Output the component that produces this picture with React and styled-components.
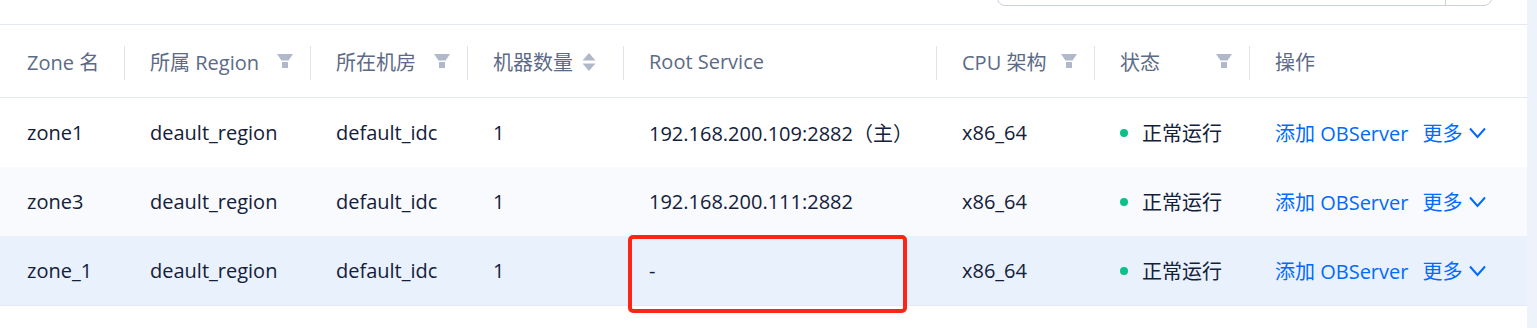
import React from 'react';
import styled, { createGlobalStyle } from 'styled-components';

const GlobalStyle = createGlobalStyle`
    html, body {
        margin:0;
        padding:0;
        background:#eef2fa;
    }
    body{
        font-family:"Open Sans", "Noto Sans CJK SC", sans-serif;
        font-size:20px;
        color:#132039;
    }
`;

const COLUMNS = '125px 186px 157px 156px 313px 158px 155px 1fr';

const Page = styled.div`
    width:1537px;
    height:328px;
    display:flex;
    overflow:hidden;
`;

const Panel = styled.section`
    position:relative;
    width:1527px;
    background:#FFF;
`;

const Toolbar = styled.div`
    height:24px;
    display:flex;
    justify-content:flex-end;
    align-items:flex-start;
    padding-right:35px;
    overflow:hidden;
    border-bottom:1px solid #e3e8f4;
`;

const SearchBox = styled.div`
    margin-top:-34px;
    width:495px;
    height:40px;
    box-sizing:border-box;
    border:1px solid #c9d0de;
    border-radius:8px;
    display:flex;
    justify-content:flex-end;
`;

const SearchButton = styled.div`
    width:45px;
    border-left:1px solid #c9d0de;
`;

const Row = styled.div`
    display:grid;
    grid-template-columns:${COLUMNS};
    height:${p => p.$head ? '72px' : '69px'};
    background:${p => p.$bg || '#FFF'};
    border-bottom:${p => p.$border ? '1px solid #e3e8f4' : 'none'};
`;

const HeadCell = styled.div`
    position:relative;
    display:flex;
    align-items:center;
    padding:1px 18px 0 ${p => p.$first ? '27px' : '25px'};
    color:#5c6a86;
    white-space:nowrap;
    &::after{
        content:'';
        display:${p => p.$last ? 'none' : 'block'};
        position:absolute;
        right:0;
        top:21px;
        width:1px;
        height:34px;
        background:#dfe3ec;
    }
`;

const Cell = styled.div`
    display:flex;
    align-items:center;
    padding-left:${p => p.$first ? '27px' : '25px'};
    white-space:nowrap;
`;

const FilterIcon = styled.svg`
    margin-left:auto;
    width:16px;
    height:15px;
    fill:#b1b8c9;
`;

const SortIcon = styled.svg`
    margin-left:9px;
    width:14px;
    height:18px;
    fill:#b1b8c9;
`;

const Dot = styled.span`
    width:8px;
    height:8px;
    border-radius:50%;
    background:#0cc08a;
    margin:0 14px 0 0;
`;

const Link = styled.a`
    color:#006aff;
    cursor:pointer;
    display:inline-flex;
    align-items:center;
    & + &{
        margin-left:14px;
    }
`;

const Chevron = styled.svg`
    margin-left:7px;
    width:17px;
    height:12px;
    fill:none;
    stroke:#006aff;
    stroke-width:2;
`;

const Marker = styled.div`
    position:absolute;
    left:628px;
    top:235px;
    width:279px;
    height:78px;
    box-sizing:border-box;
    border:4px solid #ff2418;
    border-radius:5px;
    pointer-events:none;
`;

const Filter = () => (
    <FilterIcon viewBox="0 0 16 15">
        <path d="M0 0h16l-4.5 6.5h-7z" />
        <rect x="5" y="8" width="6" height="6" />
    </FilterIcon>
);

const Sort = () => (
    <SortIcon viewBox="0 0 14 18">
        <path d="M7 0l6.5 7.5h-13z" />
        <path d="M7 18l6.5-7.5h-13z" />
    </SortIcon>
);

const headers = [
    { title: 'Zone 名' },
    { title: '所属 Region', filter: true },
    { title: '所在机房', filter: true },
    { title: '机器数量', sort: true },
    { title: 'Root Service' },
    { title: 'CPU 架构', filter: true },
    { title: '状态', filter: true },
    { title: '操作' },
];

const zones = [
    { name: 'zone1', root: '192.168.200.109:2882（主）', bg: '#FFF' },
    { name: 'zone3', root: '192.168.200.111:2882', bg: '#f8fafe' },
    { name: 'zone_1', root: '-', bg: '#e9f1fd' },
];

const App = () => {
    return (
        <>
            <GlobalStyle />
            <Page>
                <Panel>
                    <Toolbar>
                        <SearchBox>
                            <SearchButton />
                        </SearchBox>
                    </Toolbar>
                    <Row $head $border>
                        {headers.map((h, i) => (
                            <HeadCell key={h.title} $first={i === 0} $last={i === headers.length - 1}>
                                {h.title}
                                {h.filter ? <Filter /> : null}
                                {h.sort ? <Sort /> : null}
                            </HeadCell>
                        ))}
                    </Row>
                    {zones.map((z, i) => (
                        <Row key={z.name} $bg={z.bg} $border={i === zones.length - 1}>
                            <Cell $first>{z.name}</Cell>
                            <Cell>deault_region</Cell>
                            <Cell>default_idc</Cell>
                            <Cell>1</Cell>
                            <Cell>{z.root}</Cell>
                            <Cell>x86_64</Cell>
                            <Cell><Dot />正常运行</Cell>
                            <Cell>
                                <Link>添加 OBServer</Link>
                                <Link>
                                    更多
                                    <Chevron viewBox="0 0 17 12">
                                        <path d="M1 1.5l7.5 8.5 7.5-8.5" />
                                    </Chevron>
                                </Link>
                            </Cell>
                        </Row>
                    ))}
                    <Marker />
                </Panel>
            </Page>
        </>
    );
};

export default App;
